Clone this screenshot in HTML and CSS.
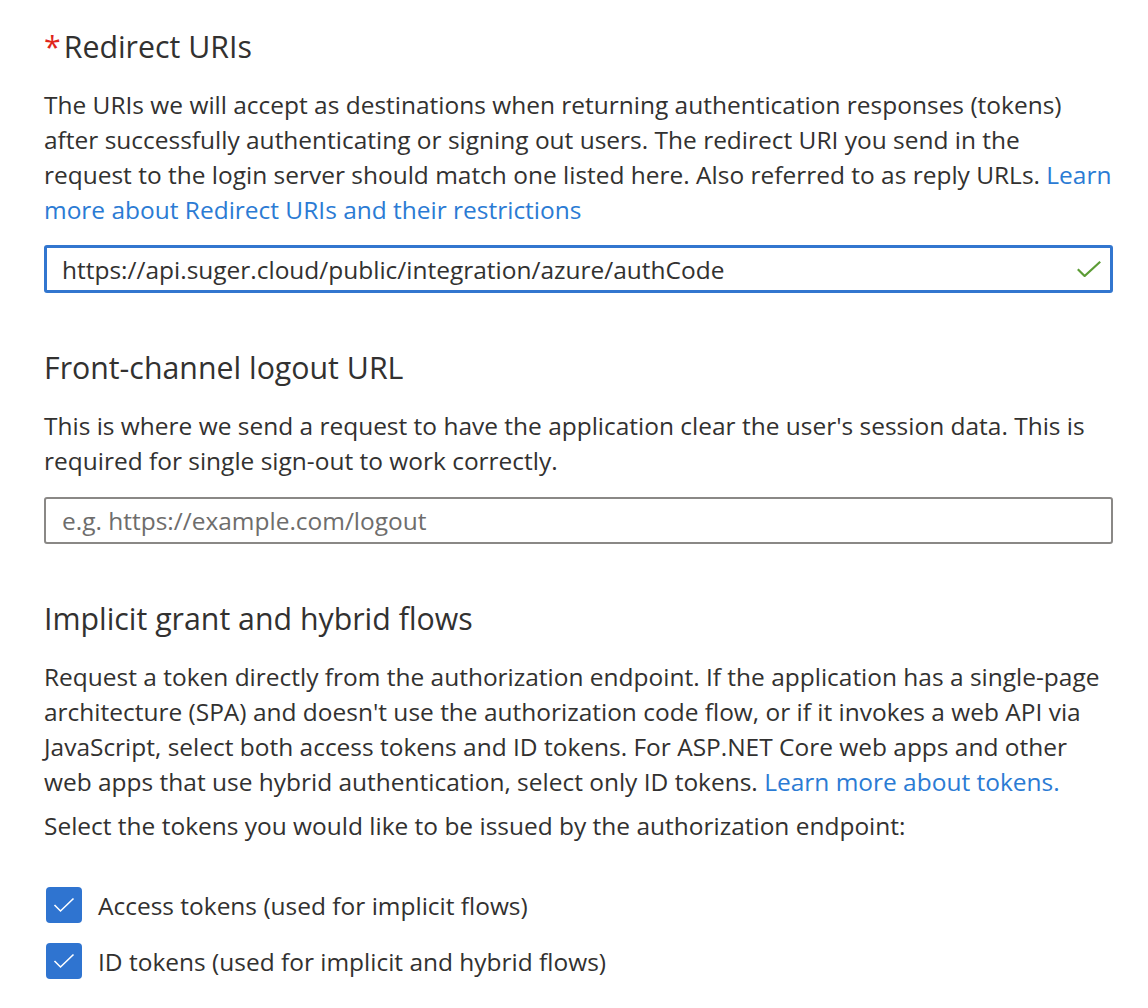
FILE: index.html
```html
<!DOCTYPE html>
<html lang="en">
<head>
  <meta charset="UTF-8">
  <title>Authentication - Redirect URIs</title>
  <link rel="stylesheet" href="styles.css">
</head>
<body>

  <div class="page">
    <!-- Redirect URIs -->
    <div class="field">
      <h2 class="field-title"><span class="required">*</span>Redirect URIs</h2>
      <p class="field-desc">
        The URIs we will accept as destinations when returning authentication responses (tokens)
        after successfully authenticating or signing out users. The redirect URI you send in the
        request to the login server should match one listed here. Also referred to as reply URLs.
        <a href="#">Learn more about Redirect URIs and their restrictions</a>
      </p>
      <div class="text-input focused">
        <span class="value">https://api.suger.cloud/public/integration/azure/authCode</span>
        <svg class="valid-icon" width="24" height="16" viewBox="0 0 24 16">
          <path d="M0.8 8.2 L7.6 15 L23.2 0.8" fill="none" stroke="#5c9c35" stroke-width="2.2"/>
        </svg>
      </div>
    </div>

    <!-- Front-channel logout -->
    <div class="field">
      <h2 class="field-title">Front-channel logout URL</h2>
      <p class="field-desc">
        This is where we send a request to have the application clear the user's session data. This is
        required for single sign-out to work correctly.
      </p>
      <div class="text-input">
        <span class="placeholder">e.g. https://example.com/logout</span>
      </div>
    </div>

    <!-- Implicit grant -->
    <div class="field">
      <h2 class="field-title">Implicit grant and hybrid flows</h2>
      <p class="field-desc">
        Request a token directly from the authorization endpoint. If the application has a single-page
        architecture (SPA) and doesn't use the authorization code flow, or if it invokes a web API via
        JavaScript, select both access tokens and ID tokens. For ASP.NET Core web apps and other
        web apps that use hybrid authentication, select only ID tokens. <a href="#">Learn more about tokens.</a>
      </p>
      <p class="field-note">Select the tokens you would like to be issued by the authorization endpoint:</p>

      <div class="check-list">
        <label class="check-row">
          <span class="checkbox">
            <svg width="22" height="16" viewBox="0 0 22 16">
              <path d="M1.5 8 L7.5 14 L20.5 1.5" fill="none" stroke="#fff" stroke-width="1.6"/>
            </svg>
          </span>
          Access tokens (used for implicit flows)
        </label>
        <label class="check-row">
          <span class="checkbox">
            <svg width="22" height="16" viewBox="0 0 22 16">
              <path d="M1.5 8 L7.5 14 L20.5 1.5" fill="none" stroke="#fff" stroke-width="1.6"/>
            </svg>
          </span>
          ID tokens (used for implicit and hybrid flows)
        </label>
      </div>
    </div>
  </div>

</body>
</html>
```

FILE: styles.css
```css
body {
  margin: 0;
  background-color: #fff;
  color: #323130;
  font-family: "Segoe UI", "Open Sans", sans-serif;
  font-size: 24.48px;
}
.page {
  padding: 27px 35px 0 44px;
}
.field {
  margin-bottom: 55px;
}
.field-title {
  margin: 0 0 20px;
  font-size: 30.3px;
  font-weight: 400;
  line-height: 40px;
}
.required {
  color: #e0261b;
  margin-right: 3px;
}
.field-desc {
  margin: 0 0 19px;
  line-height: 35px;
}
.field-desc a {
  color: #2b7bd4;
  text-decoration: none;
}
.text-input {
  display: flex;
  align-items: center;
  justify-content: space-between;
  height: 47px;
  box-sizing: border-box;
  padding: 0 9px 0 16px;
  border: 2px solid #8a8886;
  border-radius: 3px;
}
.text-input.focused {
  height: 48px;
  margin-top: -1px;
  border: 3px solid #3276cf;
  padding-left: 15px;
}
.placeholder {
  color: #6e6d6c;
}
.field-note {
  margin: -10px 0 0;
  line-height: 35px;
}
.check-list {
  display: flex;
  flex-direction: column;
  gap: 20px;
  padding: 44px 0 0 2px;
}
.check-row {
  display: flex;
  align-items: center;
  gap: 16px;
  line-height: 35px;
}
.checkbox {
  display: flex;
  align-items: center;
  justify-content: center;
  width: 36px;
  height: 36px;
  border-radius: 4px;
  background-color: #2f74d0;
}
```
